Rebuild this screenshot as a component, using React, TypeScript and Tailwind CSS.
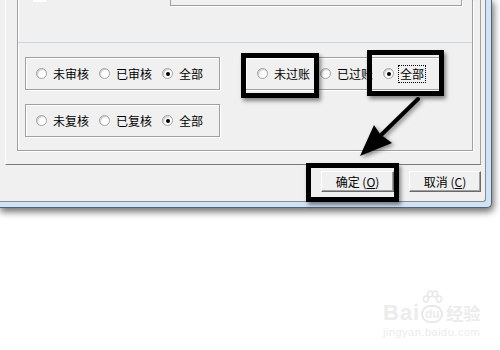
import React from "react";

function Radio({ checked }: { checked?: boolean }) {
    return (
        <span className="w-[11px] h-[11px] shrink-0 rounded-full border border-[#a2a2a2] bg-white shadow-[inset_1px_1px_1px_#c8c8c8] flex items-center justify-center">
            {checked && <span className="w-[4px] h-[4px] rounded-full bg-black" />}
        </span>
    );
}

function Option({ label, checked, focus }: { label: string; checked?: boolean; focus?: boolean }) {
    return (
        <div className="flex items-center gap-[6px]">
            <Radio checked={checked} />
            <span className={focus ? "outline outline-1 outline-dotted outline-black outline-offset-[1px] leading-[14px]" : "leading-[14px]"}>{label}</span>
        </div>
    );
}

function OptionBox({ items, focusLast, left = "pl-[10px]" }: { items: string[]; focusLast?: boolean; left?: string }) {
    return (
        <div className={`w-[195px] h-[33px] border border-[#a0a0a0] shadow-[inset_1px_1px_0_#fff,1px_1px_0_#fff] flex items-center gap-[10px] ${left}`}>
            {items.map((t, i) => (
                <Option key={t + i} label={t} checked={i === items.length - 1} focus={focusLast && i === items.length - 1} />
            ))}
        </div>
    );
}

function Button({ text, hot }: { text: string; hot: string }) {
    return (
        <div className="h-[21px] flex items-center justify-center border-t border-l border-t-white border-l-white border-b border-r border-b-[#696969] border-r-[#696969] shadow-[inset_-1px_-1px_0_#a0a0a0] bg-[#f0f0f0] text-[12px]">
            {text}&nbsp;(<span className="underline">{hot}</span>)
        </div>
    );
}

export default function App() {
    return (
        <div className="w-[500px] h-[350px] bg-white relative overflow-hidden font-['Noto_Sans_CJK_SC','Noto_Sans_CJK_JP',sans-serif] text-[12px] text-black">
            {/* window frame */}
            <div className="w-[492px] h-[208px] bg-[#cfe3f7] border-r border-b border-[#56616e] rounded-br-[5px] shadow-[1px_3px_7px_1px_rgba(0,0,0,0.55)]">
                <div className="w-[486px] h-[202px] bg-[#f0f0f0] border-r border-b border-[#8c8c8c] rounded-br-[3px]">
                    {/* raised panel */}
                    <div className="ml-[5px] w-[476px] h-[165px] border-l border-l-white border-r border-b border-r-[#a0a0a0] border-b-[#7a7a7a] pl-[11px]">
                        <div className="w-[456px] h-[151px] border-l border-r border-b border-[#a0a0a0] shadow-[inset_1px_0_0_#fff,1px_1px_0_#fff]">
                            <div className="h-[42px] flex items-start">
                                <div className="ml-[15px] w-[13px] h-[2px] bg-white" />
                                <div className="ml-[124px] w-[292px] h-[6px] border-l border-r border-b border-[#a0a0a0] shadow-[1px_1px_0_#fff]" />
                            </div>
                            <div className="h-px bg-[#c9d6e4]" />
                            <div className="pl-[7px] pt-[14px] flex items-start">
                                <div className="flex flex-col gap-[14px]">
                                    <OptionBox items={["未审核", "已审核", "全部"]} />
                                    <OptionBox items={["未复核", "已复核", "全部"]} />
                                </div>
                                <div className="ml-[25px]">
                                    <OptionBox items={["未过账", "已过账", "全部"]} focusLast left="pl-[11px]" />
                                </div>
                            </div>
                        </div>
                    </div>
                    {/* buttons */}
                    <div className="mt-[6px] pr-[4px] flex justify-end gap-[15px]">
                        <div className="w-[73px]"><Button text="确定" hot="O" /></div>
                        <div className="w-[72px]"><Button text="取消" hot="C" /></div>
                    </div>
                </div>
            </div>

            {/* annotation boxes */}
            <div className="absolute left-[241px] top-[53px] w-[78px] h-[45px] border-[5px] border-black shadow-[2px_3px_4px_rgba(0,0,0,0.45)]" />
            <div className="absolute left-[367px] top-[50px] w-[77px] h-[46px] border-[5px] border-black shadow-[2px_3px_4px_rgba(0,0,0,0.45)]" />
            <div className="absolute left-[306px] top-[163px] w-[93px] h-[39px] border-[5px] border-black shadow-[2px_3px_4px_rgba(0,0,0,0.45)]" />

            {/* arrow */}
            <svg className="absolute left-0 top-0 drop-shadow-[2px_2px_2px_rgba(0,0,0,0.45)]" width="500" height="350">
                <line x1="418" y1="99" x2="376" y2="140" stroke="#000" strokeWidth="4" strokeLinecap="round" />
                <polygon points="360,156 374,125 380,134 392,143" fill="#000" />
            </svg>

            {/* watermark */}
            <div className="absolute left-[383px] top-[287px] flex flex-col items-start text-[#ececec]">
                <div className="flex items-end h-[36px]">
                    <span className="font-['Liberation_Sans',sans-serif] font-bold text-[22px] leading-[20px] tracking-[1px]">Bai</span>
                    <span className="ml-[1px] flex flex-col items-center">
                        <svg width="22" height="14" viewBox="0 0 22 14" className="mb-[1px]">
                            <ellipse cx="5" cy="9" rx="2.5" ry="3" fill="none" stroke="#e8e8e8" strokeWidth="1.5" />
                            <ellipse cx="9" cy="4" rx="2.5" ry="3" fill="none" stroke="#e8e8e8" strokeWidth="1.5" />
                            <ellipse cx="14" cy="4" rx="2.5" ry="3" fill="none" stroke="#e8e8e8" strokeWidth="1.5" />
                            <ellipse cx="18" cy="9" rx="2.5" ry="3" fill="none" stroke="#e8e8e8" strokeWidth="1.5" />
                        </svg>
                        <span className="w-[22px] h-[18px] rounded-[9px] border-[2px] border-[#e8e8e8] font-['Liberation_Sans',sans-serif] font-bold text-[12px] leading-[14px] text-center">du</span>
                    </span>
                    <span className="ml-[3px] font-bold text-[17px] leading-[20px]">经验</span>
                </div>
                <span className="mt-[3px] font-['Liberation_Sans',sans-serif] text-[11px] leading-[12px] tracking-[0.5px]">jingyan.baidu.com</span>
            </div>
        </div>
    );
}
